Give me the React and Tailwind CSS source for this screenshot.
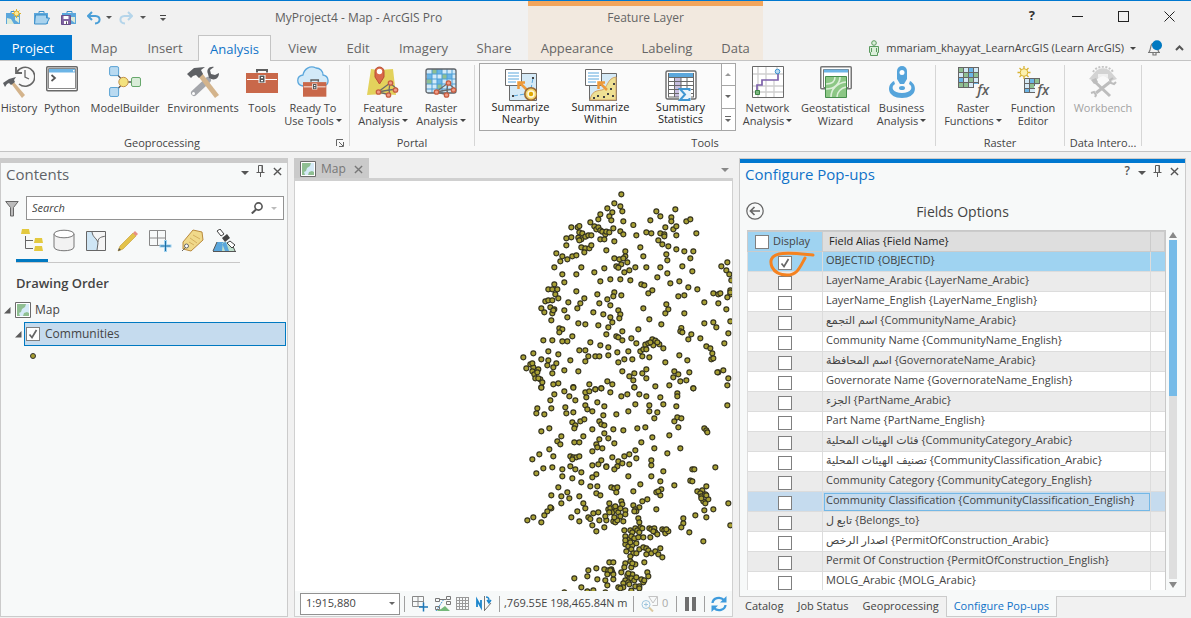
import { useState } from "react";
import clsx from "clsx";

/* ---------- data ---------- */

const FIELDS = [
  "OBJECTID {OBJECTID}",
  "LayerName_Arabic {LayerName_Arabic}",
  "LayerName_English {LayerName_English}",
  "اسم التجمع {CommunityName_Arabic}",
  "Community Name {CommunityName_English}",
  "اسم المحافظة {GovernorateName_Arabic}",
  "Governorate Name {GovernorateName_English}",
  "الجزء {PartName_Arabic}",
  "Part Name {PartName_English}",
  "فئات الهيئات المحلية {CommunityCategory_Arabic}",
  "تصنيف الهيئات المحلية {CommunityClassification_Arabic}",
  "Community Category {CommunityCategory_English}",
  "Community Classification {CommunityClassification_English}",
  "تابع ل {Belongs_to}",
  "اصدار الرخص {PermitOfConstruction_Arabic}",
  "Permit Of Construction {PermitOfConstruction_English}",
  "MOLG_Arabic {MOLG_Arabic}",
];
const CURRENT_FIELD = 12;

// community locations, three units to a screen pixel
const NORTH = `334,43 313,70 331,79 337,94 292,85 307,97 271,103 298,109 265,118 304,121 340,124 370,135 439,94 496,88 451,109 484,112 484,124
421,121 529,124 541,118 241,127 184,142 203,142 208,138 253,139 259,148 265,142 271,151 277,155 286,163 289,155 298,157 310,145 331,154 340,163 379,166
409,157 424,160 451,160 463,163 463,169 466,142 490,148 499,139 499,166 559,160 445,181 457,193 475,199 499,208 523,214 550,214
169,175 184,172 205,173 208,157 217,160 214,178 226,170 235,166 244,166 169,196 208,181 214,202 226,205 238,205 244,196 223,217 271,178 283,178 313,184 289,211
391,202 346,214 400,229 469,223 472,241 541,235 139,220 157,229 151,244 172,238 187,229 199,226 313,235 328,238 346,229 340,235 334,253 352,247 319,259 325,263
133,262 214,262 157,283 199,283 253,277 283,265 343,277 358,271 376,262 409,262 451,262 472,280 517,259 547,274 442,292 481,310 508,304
163,307 271,304 301,298 331,298 361,301 394,313 403,316 427,331 415,340 535,322 562,328 505,349 523,346 133,313 115,328 127,328 142,328 136,343 145,355
106,364 115,361 127,361 199,334 223,355 175,367 211,370 202,385 262,343 292,358 268,370 301,376 313,337 310,349 334,346 400,385 469,373 475,388 466,400 523,400
94,385 103,397 121,382 133,388 127,400 124,421 130,391 163,391 172,412 250,397 280,403 301,412 325,391 331,403 328,415 307,427 418,418 454,433
205,430 226,433 265,436 295,442 148,445 157,448 148,457 187,469 289,463 319,469 325,472 337,481 337,454 385,448 364,475 379,490
514,444 511,454 517,457 544,463 535,478 571,475 100,481 127,481 157,484 172,484 241,487 271,496 295,502 322,517 355,514
391,514 400,508 406,494 415,490 427,478 436,482 448,493 460,505 430,496 421,487 409,508 397,529 418,532 442,487 70,520 40,532 115,514 145,523 94,538 115,541 139,550
208,511 226,511 235,529 226,544 256,529 268,529 295,526 325,547 343,538 367,538 181,541 466,547 508,526 532,541
49,565 61,553 70,562 67,574 85,568 73,583 82,577 76,595 91,598 97,607 67,550 94,622 85,595 112,556 130,562 127,580 163,571 205,574 337,574
373,580 358,589 370,601 397,580 409,568 409,595 493,574 505,583 490,592 511,604 529,601 538,577 130,613 145,610 190,621 238,613 292,604 307,613 274,625 256,628 373,622 436,619 478,616 550,625
652,247 634,259 649,271 658,283 664,301 661,331 661,343 652,352 610,340 625,343 631,340 583,367 625,370 649,388 661,424 583,430 610,427 619,442
655,460 643,490 589,499 601,505 607,520 604,538 610,535 625,577 640,571 655,595 652,616 622,577 661,337`;

const SOUTH = `94,8 163,19 190,8 133,28 178,34 196,46 121,46 124,70 82,70 79,85 103,88 166,67 169,85 190,82 226,22 238,19 229,37 256,13 274,10 301,22
334,34 352,28 388,28 409,34 451,37 373,7 376,58 418,61 460,58 502,25 502,34 499,64 550,10 262,52 283,64 226,61 232,73 247,79 280,91 319,88 355,79
418,79 442,82 433,100 493,109 502,97 514,100 505,127 652,61 187,112 196,121 211,109 223,103 193,130 268,109 274,118 283,121 247,133 310,133 340,136 382,130 406,127
118,130 94,139 154,154 142,169 151,178 193,172 208,172 220,154 283,145 295,160 268,163 259,178 262,187 277,190 247,199 313,175 394,172 427,157 478,151 583,130 589,136 592,142
118,193 88,208 67,223 130,214 181,214 190,217 199,217 208,214 187,223 307,217 343,214 358,208 376,196 379,220 433,190 472,205 511,190 424,226 424,241
274,226 265,238 247,241 289,244 289,246 325,229 322,244 313,253 337,235 358,238 181,244 196,253 214,262 157,253 127,247 100,250 79,265 157,274 187,280 214,292
259,268 247,277 355,274 424,274 460,259 451,289 493,301 547,253 553,253 616,247 541,287 547,289 391,298 370,319 454,313 439,322 451,331 445,319
145,307 172,322 154,334 178,340 124,331 154,355 208,334 241,304 262,304 304,307 313,310 322,307 319,322 259,325 271,331 220,355 226,370 202,379 184,397 208,409
124,370 121,367 112,379 103,391 94,412 70,397 52,406 397,349 412,343 439,373 298,355 334,349 337,358 370,361 388,367 376,373 379,379 373,379
235,397 241,402 250,385 265,382 268,406 247,421 289,406 286,394 295,373 301,370 307,382 313,367 319,376 325,382 331,370 346,376 346,388 331,394 310,409 316,412 322,406 340,409 313,397 283,427 259,439 298,382 316,364
385,400 388,412 391,427 343,436 361,436 367,442 376,430 382,436 388,442 397,430 346,454 358,463 364,454 373,460 385,457 400,457 421,457 418,430 424,433 433,430 436,442 430,439 442,448 457,433 463,436 466,445 475,439 469,433
346,478 355,484 367,481 379,475 361,472 346,466 349,499 364,493 388,493 400,487 409,490 415,496 424,505 409,508 436,499 451,490 445,508 457,517 370,505 361,514 379,505 361,529 346,535 343,547 376,538 364,547 403,532 367,535
298,532 310,532 235,556 259,550 283,553 295,556 304,553 307,562 292,568 232,574 193,580 262,583 286,586 310,583 292,601 334,562 352,571 367,568 358,580 364,580 346,586 340,595 355,592 373,586 379,577 394,583 400,592 403,586 412,562 415,574
358,598 376,604 388,604 325,607 340,607 331,610 388,610 364,617 310,568 214,607 232,619 250,616 163,622 286,622 304,556 355,565 301,556
589,304 562,319 577,316 571,325 574,334 586,328 595,343 580,349 586,355 589,331 583,376 610,373 589,397 655,355 661,421 556,391 520,400 520,415 514,427 538,442 580,469 574,340`;

const toPoints = (text, dy) =>
  text.split(/\s+/).map((pair) => {
    const [x, y] = pair.split(",").map(Number);
    return { x, y: y + dy };
  });

const COMMUNITIES = [...toPoints(NORTH, 0), ...toPoints(SOUTH, 615)];

/* ---------- small glyphs ---------- */

function Caret({ className, large }) {
  return (
    <svg viewBox="0 0 8 4" className={clsx("shrink-0", large ? "h-1 w-2" : "h-[3px] w-[6px]", className)} fill="currentColor">
      <path d="M0 0h8L4 4z" />
    </svg>
  );
}

function ScrollArrow({ className }) {
  return (
    <svg viewBox="0 0 8 6" className={clsx("h-[6px] w-2", className)} fill="currentColor">
      <path d="M0 0h8L4 6z" />
    </svg>
  );
}

function PinIcon() {
  return (
    <svg viewBox="0 0 12 12" className="size-3" fill="none" stroke="#5c5c5c">
      <path d="M3.500 7V.500h4V7M1.500 7.500h8M5.500 7.500V12M7 .500V7" />
    </svg>
  );
}

function CloseIcon({ className }) {
  return (
    <svg viewBox="0 0 10 10" className={clsx("size-[9px]", className)} fill="none" stroke="currentColor" strokeWidth="1.5">
      <path d="M1 1l8 8M9 1l-8 8" />
    </svg>
  );
}

function Expander() {
  return (
    <svg viewBox="0 0 7 7" className="size-[7px] shrink-0" fill="#5c5c5c">
      <path d="M6.500 0v6.500H0z" />
    </svg>
  );
}

function MapThumb() {
  return (
    <svg viewBox="0 0 16 16" className="size-4 shrink-0">
      <path d="M.5.5h15v15H.5z" fill="#fff" stroke="#6b6b6b" />
      <path d="M2 2h12v12H2z" fill="#d5eaf7" />
      <path d="M2 2h9l-1 3-3 2-1 3-2 1 1 3H2zM9 11l3-1 2 1v3H8z" fill="#8fbf92" />
    </svg>
  );
}

function Check({ checked, onChange, label }) {
  return (
    <span className="grid">
      <input
        type="checkbox"
        aria-label={label}
        checked={checked}
        onChange={onChange}
        className="col-start-1 row-start-1 size-[14px] appearance-none border border-[#7f7f7f] bg-white"
      />
      {checked && (
        <svg viewBox="0 0 14 14" className="pointer-events-none col-start-1 row-start-1 size-[14px]" fill="none" stroke="#666" strokeWidth="1.7">
          <path d="M3.500 7.500l2.500 3 4.500-7.500" />
        </svg>
      )}
    </span>
  );
}

/* ---------- quick access icons ---------- */

function ProjectNewIcon({ sun, save }) {
  return (
    <svg viewBox="0 0 17 17" className="size-[17px]">
      <path d="M6 4V2.500h5V4" fill="none" stroke="#3d8fc9" />
      <path d="M1 4h14v11H1z" fill="#5ba7dc" />
      <path d="M2 9l4 1 3 5H2zM10 8h4v6l-4-3z" fill="#dcebd8" />
      {!sun && !save && <path d="M2.500 6h11v3h3l-3 6h-12z" fill="#a9d3ee" stroke="#3d8fc9" />}
      {sun && (
        <g stroke="#d9b332" fill="#fbe99a">
          <path d="M11.500 0v9M7 4.500h9M8.500 1.500l6 6M14.500 1.500l-6 6" />
          <circle cx="11.500" cy="4.500" r="2.500" />
        </g>
      )}
      {save && (
        <g>
          <path d="M.5 6.500h9v9h-9z" fill="#8064a2" stroke="#6a508c" />
          <path d="M2.500 7h5v3h-5zM3 12h4v3H3z" fill="#fff" />
          <path d="M5 12.500h1V15H5z" fill="#555" />
        </g>
      )}
    </svg>
  );
}

function UndoIcon({ redo }) {
  return (
    <svg viewBox="0 0 14 14" className="size-[14px]" fill="none" stroke={redo ? "#b5d5ea" : "#4a9fd8"} strokeWidth="2">
      <path d={redo ? "M9 1l4 4-4 4M13 5H5.500C0 5.500 0 12 6 12.500" : "M5 1L1 5l4 4M1 5h7.500c5.500.5 5.500 7-.5 7.500"} />
    </svg>
  );
}

/* ---------- ribbon icons (32 x 32) ---------- */

function Icon32({ children }) {
  return (
    <svg viewBox="0 0 32 32" className="size-8 shrink-0" fill="none">
      {children}
    </svg>
  );
}

function HistoryIcon() {
  return (
    <Icon32>
      <path d="M14 6a9.500 9.500 0 1 1 2 12" stroke="#666" strokeWidth="1.600" />
      <path d="M13 1v6h6" stroke="#666" strokeWidth="1.800" />
      <path d="M22 4v7l4 2" stroke="#666" strokeWidth="1.300" />
      <path d="M7 16l3-1 12 14-3 3z" fill="#d4b48c" />
      <path d="M0 17l6-4 7-2-2 3 1 2-4 3-2-2-2 1-2 3z" fill="#5e6064" />
    </Icon32>
  );
}

function PythonIcon() {
  return (
    <Icon32>
      <rect x=".75" y=".75" width="30.500" height="24" rx="1" fill="#fff" stroke="#696969" strokeWidth="1.500" />
      <path d="M2.500 2.500h27v20h-27z" stroke="#8a8a8a" />
      <path d="M3 3h26v3.500H3z" fill="#6cb5e6" />
      <path d="M27 4h1.500v1.500H27z" fill="#fff" />
      <path d="M5.500 9l3.500 3-3.500 3" stroke="#555" strokeWidth="1.700" />
    </Icon32>
  );
}

function ModelBuilderIcon() {
  return (
    <Icon32>
      <path d="M6 6l9 10L6 26M15 16h12" stroke="#555" strokeWidth="1.300" />
      <rect x=".6" y=".6" width="9" height="9" rx="1.500" fill="#b9daf1" stroke="#5ba3d4" />
      <rect x=".6" y="21.500" width="9" height="9" rx="1.500" fill="#b9daf1" stroke="#5ba3d4" />
      <circle cx="14.500" cy="16" r="4.700" fill="#f3e27e" stroke="#c3924a" />
      <rect x="22.500" y="11.500" width="9" height="9" rx="1.500" fill="#d9ecd8" stroke="#68a86c" />
    </Icon32>
  );
}

function EnvironmentsIcon() {
  return (
    <Icon32>
      <path d="M21 14L7 27" stroke="#a4a6ab" strokeWidth="6" strokeLinecap="round" />
      <circle cx="6.500" cy="27.500" r="1.500" fill="#fff" />
      <path d="M32 7l-4 2-4-1-1-4 4-3c-5-1-8 3-6 7l1 4c5 3 10 1 10-5z" fill="#5e6064" />
      <path d="M11 10l4-3 17 22-4 3z" fill="#d4b48c" />
      <path d="M0 8l7-6 11-1-4 3 2 4-4 4-3-3-3 1-2 2z" fill="#5e6064" />
    </Icon32>
  );
}

function Toolbox() {
  return (
    <>
      <path d="M11 6.500V4h10v2.500" stroke="#5e5e5e" strokeWidth="2" />
      <path d="M0 7h32v20H0z" fill="#c9684a" />
      <path d="M1 13.500h12M19 13.500h12" stroke="#fff" strokeWidth="1.200" />
      <path d="M12.500 9h7v8h-7z" fill="#fff" />
      <path d="M13.500 9.500h5v7h-5z" fill="#555" />
      <path d="M15 11h2v1.300h-2zM15 14h2v1.300h-2z" fill="#fff" />
    </>
  );
}

function ToolsIcon() {
  return (
    <Icon32>
      <Toolbox />
    </Icon32>
  );
}

function ReadyToUseIcon() {
  return (
    <Icon32>
      <path d="M6 20C-1 19-1 10 6 9 7 3 13-1 19 2c4 0 7 3 7 7 6 1 7 9 1 11z" fill="#d3eaf8" stroke="#5ba7dc" strokeWidth="1.300" />
      <g transform="translate(6 11) scale(.73)">
        <Toolbox />
      </g>
    </Icon32>
  );
}

function Network() {
  return (
    <g>
      <path d="M11 26l12-9 7 6-8 1 1 5zM22 24l-11 2M23 17l-1 7" stroke="#6b6b6b" strokeWidth="1.300" />
      <g fill="#f09d88" stroke="#c65d40" strokeWidth="1.300">
        <circle cx="11.500" cy="26" r="2.200" />
        <circle cx="23.500" cy="17" r="2.200" />
        <circle cx="28.500" cy="24" r="2.200" />
        <circle cx="21.500" cy="29" r="2.200" />
      </g>
    </g>
  );
}

function FeatureAnalysisIcon() {
  return (
    <Icon32>
      <path d="M4 3l8 1 14-1 3 26-12-1-17 1z" fill="#e3d25c" />
      <path d="M8 5.500a4.500 4.500 0 0 1 9 0V11l-4.500 7L8 11z" fill="#d9694a" stroke="#b94f33" />
      <circle cx="12.500" cy="5.500" r="2.700" fill="#fff" />
      <Network />
    </Icon32>
  );
}

function RasterAnalysisIcon() {
  return (
    <Icon32>
      <rect x="1" y="3" width="30" height="24" rx="2" fill="#d3eaf8" />
      <path d="M7 3h5v5H7zM17 8h5v5h-5zM2 13h5v5H2zM12 18h5v5h-5z" fill="#8fbf92" />
      <path d="M12 3h5v5h-5zM2 8h5v5H2zM22 8h5v5h-5zM12 13h5v5h-5z" fill="#6cb5e6" />
      <path d="M7 3v24M12 3v24M17 3v24M22 3v24M27 3v24M1 8h30M1 13h30M1 18h30M1 23h30" stroke="#4c9ed6" />
      <rect x="1" y="3" width="30" height="24" rx="2" stroke="#5f6368" strokeWidth="1.300" />
      <Network />
    </Icon32>
  );
}

function SummaryPage() {
  return (
    <>
      <path d="M.5.5h16v16H.5z" fill="#fff" stroke="#696969" />
      <path d="M3 4h11M3 7h11M3 10h11M3 13h8" stroke="#5ba7dc" />
      <path d="M22 21l-8-8M13.500 20v-6.500H20" stroke="#ee9a3a" strokeWidth="2.500" />
    </>
  );
}

function SummarizeNearbyIcon() {
  return (
    <Icon32>
      <path d="M4.500 4.500h27v27h-27z" fill="#d5eaf7" stroke="#696969" />
      <path d="M28 9l-2 11M8 27l12-2" stroke="#5ba7dc" strokeDasharray="5 2" />
      <path d="M27 8h2v2h-2zM7 26h2v2H7z" fill="#444" />
      <SummaryPage />
      <circle cx="26" cy="25" r="6.200" fill="#f4d56b" stroke="#9b6a35" strokeWidth="1.600" />
      <circle cx="26" cy="25" r="3.700" fill="#fff8dc" />
      <circle cx="26" cy="25" r="2.200" fill="#dfa800" />
    </Icon32>
  );
}

function SummarizeWithinIcon() {
  return (
    <Icon32>
      <path d="M4.500 4.500h27v27h-27z" fill="#d5eaf7" stroke="#696969" />
      <path d="M5 31c2-9 6-9 12-10 6-2 5-12 14-13v23z" fill="#eee093" stroke="#d2a468" />
      <path d="M12 26h2v2h-2zM18 27h2v2h-2zM22 24h2v2h-2zM27 26h2v2h-2zM25 19h2v2h-2zM28 14h2v2h-2zM8 28h2v2H8z" fill="#444" />
      <SummaryPage />
    </Icon32>
  );
}

function SummaryStatisticsIcon() {
  return (
    <Icon32>
      <rect x="1" y="2" width="30" height="28" rx="1.500" fill="#fff" stroke="#696969" strokeWidth="1.400" />
      <path d="M3 4h26v4H3z" fill="#5ba7dc" />
      <path d="M9 8h7v20H9z" fill="#c7bedf" />
      <path d="M3 8.500h26M3 12.500h26M3 16.500h26M3 20.500h26M3 24.500h26M3 28h26M3.500 4v24M9.500 8v20M16 8v20M22 8v20M28.500 4v24" stroke="#696969" />
      <path d="M14 19h12v13H14z" fill="#e9f3fa" />
      <path d="M24.500 22v-2H15l5 5.500-5 5.500h9.500v-2" stroke="#3f96d2" strokeWidth="2" />
    </Icon32>
  );
}

function NetworkAnalysisIcon() {
  return (
    <Icon32>
      <path d="M.5.5h31v31H.5z" fill="#fff" stroke="#696969" />
      <path d="M6 1v30M1 8h30M14 1v30M22 14v17M1 20h30M1 26h30M25 1v8" stroke="#cfcfcf" strokeWidth="1.300" />
      <path d="M5 26v-7h5v-5h16V6" stroke="#7d62ab" strokeWidth="1.700" />
      <circle cx="25.500" cy="5.500" r="2.300" fill="#b9daf1" stroke="#3f96d2" />
      <path d="M3.500 24.500h4v4h-4z" fill="#7cb77f" stroke="#3e8546" />
    </Icon32>
  );
}

function GeostatisticalIcon() {
  return (
    <Icon32>
      <rect x=".75" y=".75" width="30.500" height="22" rx="1" fill="#fff" stroke="#777" strokeWidth="1.500" />
      <path d="M3.500 3.500h25v18h-25z" fill="#fff" stroke="#777" />
      <path d="M4 3.500h24v3H4z" fill="#6cb5e6" />
      <path d="M5.500 10.500h21v21h-21z" fill="#8cc785" stroke="#468d4c" />
      <path d="M6 18c6 0 9-3 9-7M6 23c8 0 14-5 14-12M11 31c0-8 6-14 15-15M17 31c0-5 4-9 9-10" stroke="#dcefd9" strokeWidth="1.600" />
    </Icon32>
  );
}

function BusinessIcon() {
  return (
    <Icon32>
      <path d="M8 15c-8 4-7 17 8 17s16-13 8-17l-1 3c5 3 2 9-7 9s-12-6-7-9z" fill="#55a4db" />
      <path d="M11 5a5 5 0 0 1 10 0v8l-3 5h-4l-3-5z" fill="#55a4db" />
      <circle cx="16" cy="6.500" r="2.500" fill="#fff" />
      <ellipse cx="16" cy="22" rx="3" ry="2" fill="#55a4db" />
    </Icon32>
  );
}

function FxIcon({ grid }) {
  return (
    <span className="grid size-8 shrink-0">
      <svg viewBox="0 0 32 32" className="col-start-1 row-start-1 size-8" fill="none">
        {grid}
      </svg>
      <span className="col-start-1 row-start-1 self-end justify-self-end text-sm leading-4 font-semibold text-[#5e5e5e] italic">fx</span>
    </span>
  );
}

function RasterFunctionsIcon() {
  return (
    <FxIcon
      grid={
        <>
          <path d="M1 1h20v20H1z" fill="#d5eaf7" />
          <path d="M1 1h5v5H1zM6 6h5v5H6zM16 6h5v5h-5zM11 11h5v5h-5zM1 16h10v5H1z" fill="#8fbf92" />
          <path d="M11 1h5v5h-5zM1 11h5v5H1zM11 6h5v5h-5zM16 16h5v5h-5z" fill="#6cb5e6" />
          <path d="M1.500 1v20M6.500 1v20M11.500 1v20M16.500 1v20M21.500 1v20M1 1.500h21M1 6.500h21M1 11.500h21M1 16.500h21M1 21.500h21" stroke="#666" />
          <path d="M17 18h15v14H17z" fill="#f9f9f9" />
        </>
      }
    />
  );
}

function FunctionEditorIcon() {
  return (
    <FxIcon
      grid={
        <>
          <path d="M7 12h15v15H7z" fill="#d5eaf7" />
          <path d="M12 17h5v5h-5zM17 12h5v5h-5z" fill="#8fbf92" />
          <path d="M7 22h5v5H7zM12 12h5v5h-5z" fill="#6cb5e6" />
          <path d="M7.500 12v15M12.500 12v15M17.500 12v8M22.500 12v6M7 12.500h16M7 17.500h16M7 22.500h11M7 26.500h11" stroke="#666" />
          <path d="M18 19h14v13H18z" fill="#f9f9f9" />
          <path d="M7 0v13M.5 6.500h13M2.500 2l9 9M11.500 2l-9 9" stroke="#d9b332" strokeWidth="1.300" />
          <circle cx="7" cy="6.500" r="3.800" fill="#fbf0b0" stroke="#d9b332" />
        </>
      }
    />
  );
}

function WorkbenchIcon() {
  return (
    <Icon32>
      <path d="M6 6C10-1 22-1 26 6" stroke="#c4c4c4" strokeWidth="2" strokeDasharray="2 1.500" />
      <path d="M2 13l6-7c4-5 12-5 16 0l6 7-6 2-8-7-8 7z" fill="#d3d3d3" />
      <path d="M11 8h10v4l-5-2-5 2z" fill="#f0f0f0" />
      <path d="M7 15l16 15M23 16L9 27" stroke="#bdbdbd" strokeWidth="3" />
      <path d="M26 12l-3 2 1 3 3 1 2-2" stroke="#bdbdbd" strokeWidth="2" />
      <path d="M4 27l3-1 2 3-1 2" stroke="#bdbdbd" strokeWidth="2" />
      <path d="M4 14l5-2 2 4-4 2z" fill="#bdbdbd" />
    </Icon32>
  );
}

/* ---------- header ---------- */

const LEFT_TABS = [
  { name: "Map", width: "w-16" },
  { name: "Insert", width: "w-[58px]" },
  { name: "Analysis", width: "ml-1 w-[73px]", active: true },
  { name: "View", width: "w-[63px]" },
  { name: "Edit", width: "w-12" },
  { name: "Imagery", width: "w-[83px]" },
  { name: "Share", width: "w-[58px]" },
];

function Header() {
  return (
    <header className="flex h-[61px] shrink-0 border-t border-b border-t-[#0078d0] border-b-[#c4c4c4] bg-[#f1f1f1]">
      <div className="flex w-[528px] shrink-0 flex-col">
        <div className="flex h-[34px] items-center pb-px pl-[5px]">
          <div className="flex w-[270px] items-center text-[#555]">
            <button aria-label="New project"><ProjectNewIcon sun /></button>
            <button aria-label="Open project" className="ml-[11px]"><ProjectNewIcon /></button>
            <button aria-label="Save project" className="ml-[11px]"><ProjectNewIcon save /></button>
            <button aria-label="Undo" className="ml-[9px] flex items-center gap-[5px]"><UndoIcon /><Caret /></button>
            <button aria-label="Redo" className="ml-[7px] flex items-center gap-[7px]"><UndoIcon redo /><Caret /></button>
            <button aria-label="Customize quick access" className="ml-[14px] flex flex-col items-center gap-[2px]">
              <span className="h-px w-[6px] bg-[#444]" />
              <Caret />
            </button>
          </div>
          <h1 className="text-xs text-[#5f5f5f]">MyProject4 - Map - ArcGIS Pro</h1>
        </div>
        <nav className="flex h-[25px] items-stretch text-[13px] text-[#666]">
          <button className="w-[72px] bg-[#0078d0] pt-[3px] pr-[6px] text-white">Project</button>
          {LEFT_TABS.map((tab) => (
            <button
              key={tab.name}
              className={clsx(
                "pt-[3px]",
                tab.width,
                tab.active && "-mb-px border border-b-0 border-[#c4c4c4] bg-[#f9f9f9] text-[#0f72c8]",
              )}
            >
              {tab.name}
            </button>
          ))}
        </nav>
      </div>

      <div className="flex w-[235px] shrink-0 flex-col border-t-[5px] border-[#f3a55b] bg-[#f2e9df] text-[#666]">
        <p className="flex h-[29px] items-center justify-center pb-[6px] text-xs">Feature Layer</p>
        <nav className="flex h-[25px] pt-[3px] text-[13px]">
          <button className="w-[98px]">Appearance</button>
          <button className="w-[82px]">Labeling</button>
          <button className="w-[55px]">Data</button>
        </nav>
      </div>

      <div className="flex flex-1 flex-col items-end">
        <div className="flex h-[30px] items-center gap-[35px] pr-4 text-[#333]">
          <button aria-label="Help" className="mr-[2px] text-[13px] font-bold">?</button>
          <button aria-label="Minimize" className="flex h-3 w-[11px] items-center"><span className="h-px w-full bg-[#222]" /></button>
          <button aria-label="Maximize" className="size-[11px] border border-[#222]" />
          <button aria-label="Close">
            <svg viewBox="0 0 11 11" className="size-[11px]" stroke="#222"><path d="M.5.5l10 10M10.500.5l-10 10" /></svg>
          </button>
        </div>
        <div className="flex h-[29px] items-center pt-[5px] pr-[7px] text-[#555]">
          <svg viewBox="0 0 12 16" className="mr-[6px] h-4 w-3" fill="#dbeed9" stroke="#5a9a5e">
            <circle cx="6" cy="3" r="2.300" />
            <path d="M1.500 6.500h9v6h-1v3h-7v-3h-1zM3.500 8v4M8.500 8v4" />
          </svg>
          <button className="flex items-center gap-[6px] text-[11px] text-[#444]">
            mmariam_khayyat_LearnArcGIS (Learn ArcGIS)
            <Caret />
          </button>
          <button aria-label="Notifications" className="ml-[11px]">
            <svg viewBox="0 0 16 16" className="size-4" fill="none" stroke="#777" strokeWidth="1.200">
              <path d="M1 12.500h12M2 12c2-2 1-6 3-8 1-1 3-1 4 0 2 2 1 6 3 8M6 13v2h3v-2" />
              <circle cx="10" cy="5.200" r="5" fill="#0079c1" stroke="none" />
            </svg>
          </button>
          <button aria-label="Collapse ribbon" className="ml-3">
            <svg viewBox="0 0 9 6" className="h-[6px] w-[9px]" fill="none" stroke="#555" strokeWidth="2"><path d="M1 5l3.500-3.500L8 5" /></svg>
          </button>
        </div>
      </div>
    </header>
  );
}

/* ---------- ribbon ---------- */

function RibbonButton({ icon, lines, width, menu, muted }) {
  return (
    <button className={clsx("flex shrink-0 flex-col items-center pt-[5px]", width, muted ? "text-[#a3a3a3]" : "text-[#444]")}>
      {icon}
      <span className="mt-[3px] text-[11px] leading-[13px] whitespace-nowrap">
        {lines[0]}
        {lines[1] && (
          <span className="flex items-center justify-center gap-[2px]">
            {lines[1]}
            {menu && <Caret />}
          </span>
        )}
      </span>
    </button>
  );
}

function RibbonGroup({ title, width, launcher, children }) {
  return (
    <section className={clsx("flex shrink-0 flex-col", width)}>
      <div className={clsx("flex h-[72px]", launcher ? "justify-start" : "justify-center")}>{children}</div>
      <div className="flex h-[18px] items-center pt-[2px] text-[11px] text-[#444]">
        <h2 className={clsx("flex-1 text-center", launcher && "pr-3")}>{title}</h2>
        {launcher && (
          <button aria-label={`${title} options`} className="mr-[5px]">
            <svg viewBox="0 0 8 8" className="size-2" fill="none" stroke="#666"><path d="M.5 7V.5H7M3 3l4 4M7.500 3v4.500H3" /></svg>
          </button>
        )}
      </div>
    </section>
  );
}

function Divider() {
  return <div className="mt-1 mb-[5px] w-px shrink-0 bg-[#d6d6d6]" />;
}

function Gallery() {
  return (
    <div className="mt-[2px] flex h-[68px] w-[257px] shrink-0 border border-[#a6a6a6] bg-white text-[#222]">
      <div className="flex flex-1 bg-[#fbfbfb] pl-px">
        <GalleryItem icon={<SummarizeNearbyIcon />} lines={["Summarize", "Nearby"]} />
        <GalleryItem icon={<SummarizeWithinIcon />} lines={["Summarize", "Within"]} />
        <GalleryItem icon={<SummaryStatisticsIcon />} lines={["Summary", "Statistics"]} />
      </div>
      <div className="flex w-[15px] flex-col divide-y divide-[#a6a6a6] border-l border-[#a6a6a6] text-[#666]">
        <button aria-label="Scroll up" className="flex flex-1 items-center justify-center"><Caret className="rotate-180 text-[#999]" /></button>
        <button aria-label="Scroll down" className="flex flex-1 items-center justify-center"><Caret /></button>
        <button aria-label="More tools" className="flex flex-1 flex-col items-center justify-center gap-[2px]">
          <span className="h-px w-[6px] bg-[#666]" />
          <Caret />
        </button>
      </div>
    </div>
  );
}

function GalleryItem({ icon, lines }) {
  return (
    <button className="flex w-20 flex-col items-center pt-[5px]">
      {icon}
      <span className="text-[11px] leading-3">{lines[0]}</span>
      <span className="text-[11px] leading-3">{lines[1]}</span>
    </button>
  );
}

function Ribbon() {
  return (
    <div className="flex h-[91px] shrink-0 overflow-hidden border-b border-[#c4c4c4] bg-[#f9f9f9]">
      <RibbonGroup title="Geoprocessing" width="w-[349px]" launcher>
        <RibbonButton icon={<HistoryIcon />} lines={["History"]} width="w-[38px]" />
        <RibbonButton icon={<PythonIcon />} lines={["Python"]} width="w-12" />
        <RibbonButton icon={<ModelBuilderIcon />} lines={["ModelBuilder"]} width="w-[78px]" />
        <RibbonButton icon={<EnvironmentsIcon />} lines={["Environments"]} width="w-[78px]" />
        <RibbonButton icon={<ToolsIcon />} lines={["Tools"]} width="w-10" />
        <RibbonButton icon={<ReadyToUseIcon />} lines={["Ready To", "Use Tools"]} width="w-[62px]" menu />
      </RibbonGroup>
      <Divider />
      <RibbonGroup title="Portal" width="w-[124px]">
        <RibbonButton icon={<FeatureAnalysisIcon />} lines={["Feature", "Analysis"]} width="w-[58px]" menu />
        <RibbonButton icon={<RasterAnalysisIcon />} lines={["Raster", "Analysis"]} width="w-[58px]" menu />
      </RibbonGroup>
      <Divider />
      <RibbonGroup title="Tools" width="w-[460px]">
        <Gallery />
        <RibbonButton icon={<NetworkAnalysisIcon />} lines={["Network", "Analysis"]} width="w-16" menu />
        <RibbonButton icon={<GeostatisticalIcon />} lines={["Geostatistical", "Wizard"]} width="w-[72px]" />
        <RibbonButton icon={<BusinessIcon />} lines={["Business", "Analysis"]} width="w-[60px]" menu />
      </RibbonGroup>
      <Divider />
      <RibbonGroup title="Raster" width="w-[128px]">
        <RibbonButton icon={<RasterFunctionsIcon />} lines={["Raster", "Functions"]} width="w-[66px]" menu />
        <RibbonButton icon={<FunctionEditorIcon />} lines={["Function", "Editor"]} width="w-[54px]" />
      </RibbonGroup>
      <Divider />
      <RibbonGroup title="Data Intero..." width="w-[76px]">
        <RibbonButton icon={<WorkbenchIcon />} lines={["Workbench"]} width="w-[76px]" muted />
      </RibbonGroup>
      <Divider />
    </div>
  );
}

/* ---------- contents pane ---------- */

const LIST_MODES = [
  {
    name: "List by drawing order",
    art: (
      <>
        <path d="M2 0h7l1 5H1zM15 9h7l1 5h-9zM15 17h7l1 5h-9z" fill="#e3c93f" />
        <path d="M5.500 7v12.500H13M5.500 11.500H13" stroke="#666" />
      </>
    ),
  },
  {
    name: "List by data source",
    art: (
      <>
        <path d="M2 5v13c0 5 20 5 20 0V5" fill="#f2f2f2" stroke="#777" />
        <ellipse cx="12" cy="5" rx="10" ry="3.800" fill="#fff" stroke="#777" />
      </>
    ),
  },
  {
    name: "List by selection",
    art: (
      <>
        <path d="M2.500 2.500h19v19h-19z" fill="#f5f5f5" stroke="#666" />
        <path d="M3 3h5c1 6 5 7 6 11l-1 7H3z" fill="#cfe6f5" />
        <path d="M8 3c1 6 5 6 6 11l-1 7M14 13c0-5 4-5 8-6" stroke="#666" />
      </>
    ),
  },
  {
    name: "List by editing",
    art: (
      <>
        <path d="M2 22l2-5L17 4l3 3L7 20z" fill="#e3c24a" stroke="#c49b2c" strokeWidth=".6" />
        <path d="M17 4l2-2 3 3-2 2z" fill="#e88f83" />
        <path d="M2 22l1-3 2 2z" fill="#555" />
      </>
    ),
  },
  {
    name: "List by snapping",
    art: (
      <>
        <path d="M1.500 1.500h16v15h-16zM9.500 1.500v15M1.500 9h16" stroke="#888" />
        <path d="M17.500 11v12M11.500 17h12" stroke="#9fd2f0" strokeWidth="3" />
        <path d="M17.500 12v10M12.500 17h10" stroke="#1d6fa5" />
      </>
    ),
  },
  {
    name: "List by labeling",
    art: (
      <>
        <path d="M3 13L13 1l9 2 1 8-12 11-8-2z" fill="#f0d98a" stroke="#b98a3d" />
        <path d="M10 9l7 5M13 6l7 4M9 13l5 3" stroke="#c79c4c" strokeWidth=".7" />
        <circle cx="6.500" cy="17" r="2" fill="#fff" stroke="#666" />
        <path d="M6 18l-4 4" stroke="#666" />
      </>
    ),
  },
  {
    name: "List by perspective imagery",
    art: (
      <>
        <path d="M5 13h14l4 9H1z" fill="#bfe0cc" />
        <path d="M5 13l-4 9h9l1-9zM14 13l3 9h-4l-3-8z" fill="#5ba7dc" />
        <path d="M1 22.500h23M5 13l-4 9M20 15l3 7" stroke="#555" />
        <path d="M5 2l3-2 4 5-3 2zM15 14l3-2 5 4-3 3z" fill="#fff" stroke="#444" />
        <path d="M10 9l5-4 3 4-5 4z" fill="#444" />
      </>
    ),
  },
];

function ContentsPane() {
  const [visible, setVisible] = useState(true);
  return (
    <aside className="flex w-72 shrink-0 flex-col border border-t-[5px] border-[#cbcbcb] bg-[#f7f9f9] text-[#444]">
      <div className="flex h-[22px] items-center pr-[5px] pl-[5px] text-[#555]">
        <h2 className="flex-1 text-[15px] text-[#5f6368]">Contents</h2>
        <div className="flex items-center gap-[6px] pb-[6px]">
          <button aria-label="Contents menu" className="pt-1"><Caret large /></button>
          <button aria-label="Auto hide contents"><PinIcon /></button>
          <button aria-label="Close contents"><CloseIcon /></button>
        </div>
      </div>

      <div className="mt-[11px] flex items-center gap-[7px] pr-[3px] pl-1">
        <button aria-label="Filter">
          <svg viewBox="0 0 14 17" className="h-[17px] w-[14px]" fill="#bbb" stroke="#666"><path d="M.7 1.500h12.500L8.500 7.500V16h-3V7.500z" /></svg>
        </button>
        <label className="flex h-6 flex-1 items-center border border-[#929292] bg-white pr-[6px] pl-[5px]">
          <input type="search" placeholder="Search" aria-label="Search" className="min-w-0 flex-1 pt-px text-[11px] italic outline-none placeholder:text-[#444]" />
          <svg viewBox="0 0 12 12" className="size-3" fill="none" stroke="#555" strokeWidth="1.600">
            <circle cx="7.500" cy="4.500" r="3.600" />
            <path d="M5 7.500L.8 11.500" strokeWidth="2" />
          </svg>
          <Caret className="ml-2 text-[#bbb]" />
        </label>
      </div>

      <div className="mt-[9px] mr-auto ml-[15px] flex border-b border-[#c8c8c8]">
        {LIST_MODES.map((mode, i) => (
          <button
            key={mode.name}
            aria-label={mode.name}
            className={clsx("flex h-[33px] w-8 justify-center border-b-[3px]", i === 0 ? "border-[#0079c1]" : "border-transparent")}
          >
            <svg viewBox="0 0 24 24" className="size-6" fill="none">{mode.art}</svg>
          </button>
        ))}
      </div>

      <h3 className="mt-[10px] pl-[15px] text-[13px] leading-5 font-semibold">Drawing Order</h3>
      <ul className="mt-[6px] text-xs">
        <li className="flex h-[22px] items-center gap-1 pl-[3px]">
          <Expander />
          <MapThumb />
          Map
        </li>
        <li className="mt-px flex items-center gap-[2px] pr-px pl-[14px]">
          <Expander />
          <label className="flex h-6 flex-1 items-center gap-[5px] border border-[#0079c1] bg-[#c5dbee] pl-px">
            <Check checked={visible} onChange={() => setVisible(!visible)} label="Communities" />
            Communities
          </label>
        </li>
        <li className="pt-[7px] pl-[29px]">
          <svg viewBox="0 0 18 18" className="size-[6px]"><circle cx="9" cy="9" r="7.500" fill="#a69d31" stroke="#333" strokeWidth="3" /></svg>
        </li>
      </ul>
    </aside>
  );
}

/* ---------- map view ---------- */

function StatusDivider() {
  return <span className="h-4 w-px shrink-0 bg-[#a0a0a0]" />;
}

function StatusBar() {
  return (
    <div className="flex h-[25px] shrink-0 items-center bg-[#f7f9f9] pl-[5px] text-[11px] text-[#444]">
      <label className="flex h-[22px] w-[100px] shrink-0 items-center border border-[#929292] bg-white pr-[4px] pl-[5px]">
        <select aria-label="Map scale" defaultValue="1:915,880" className="flex-1 appearance-none outline-none">
          <option>1:915,880</option>
        </select>
        <Caret className="text-[#666]" />
      </label>
      <div className="ml-1 flex items-center gap-[7px]">
        <StatusDivider />
        <button aria-label="Snapping">
          <svg viewBox="0 0 16 16" className="size-4" fill="none">
            <path d="M.5.5h11v10H.5zM6 .5v10M.5 5.500h11" stroke="#888" />
            <path d="M11.500 6.500v9M7 11h9" stroke="#1d78b8" strokeWidth="1.500" />
          </svg>
        </button>
        <button aria-label="Dynamic constraints">
          <svg viewBox="0 0 16 16" className="size-4" fill="none">
            <path d="M1 15h14l-5-5-4 3z" fill="#74b87a" />
            <path d="M1 15l8-12" stroke="#3f96d2" strokeDasharray="2 1" />
            <path d="M.5 2.500h4v3h-4zM11.500.5h4v3h-4zM11.500 5.500h4v3h-4zM.5 10.500h4v3h-4zM5 3.500h6" stroke="#777" />
          </svg>
        </button>
        <button aria-label="Grid" className="-ml-[2px]">
          <svg viewBox="0 0 13 13" className="size-[13px]" stroke="#999"><path d="M.5 0v13M3.500 0v13M6.500 0v13M9.500 0v13M12.500 0v13M0 .5h13M0 3.500h13M0 6.500h13M0 9.500h13M0 12.500h13" /></svg>
        </button>
        <button aria-label="North up">
          <svg viewBox="0 0 16 15" className="h-[15px] w-4" fill="none">
            <path d="M1 11V4l4 7V4" stroke="#1d86cc" strokeWidth="1.800" />
            <path d="M8.500 0v15M9 14l6-7" stroke="#777" />
            <path d="M10 1c3 0 3 2 3 5M11 4l2 3 2-3" stroke="#1d86cc" strokeWidth="1.400" />
          </svg>
        </button>
      </div>
      <div className="ml-[7px] flex flex-1 items-center overflow-hidden whitespace-nowrap">
        <StatusDivider />
        <span className="pl-1">,769.55E 198,465.84N m</span>
      </div>
      <StatusDivider />
      <button className="ml-[7px] flex h-5 w-8 items-center gap-1 text-[#aaa]" aria-label="Selected features: 0">
        <svg viewBox="0 0 17 16" className="h-4 w-[17px]" fill="none" stroke="#c3c3c3">
          <path d="M7.500.5h9v9h-5M8 1l4 6 4-6" />
          <circle cx="5" cy="8.500" r="4" stroke="#9fc6de" />
          <path d="M3 8.500h4M5 6.500v4" stroke="#9fc6de" />
          <path d="M8 11.500l4 4" stroke="#dcc9a0" strokeWidth="2" />
        </svg>
        0
      </button>
      <div className="flex items-center gap-2 pr-[5px] pl-[3px]">
        <StatusDivider />
        <button aria-label="Pause drawing" className="flex gap-[3px]">
          <span className="h-[14px] w-1 bg-[#6f6f6f]" />
          <span className="h-[14px] w-1 bg-[#6f6f6f]" />
        </button>
        <StatusDivider />
        <button aria-label="Refresh" className="-ml-[2px]">
          <svg viewBox="0 0 16 16" className="size-4" fill="none" stroke="#3f9bdc" strokeWidth="2.300">
            <path d="M1.500 7C2 2 9 0 13 4M14.500 9C14 14 7 16 3 12" />
            <path d="M15.500 0v6.500H9zM.5 16V9.500H7z" fill="#3f9bdc" stroke="none" />
          </svg>
        </button>
      </div>
    </div>
  );
}

function MapPane() {
  return (
    <main className="flex min-w-0 flex-1 flex-col">
      <div className="flex h-5 shrink-0 items-center justify-between pr-1">
        <div className="flex h-5 w-[75px] items-center bg-[#cacaca] pt-[2px] pl-[6px] text-xs text-[#777]">
          <MapThumb />
          <span className="ml-[5px]">Map</span>
          <button aria-label="Close map" className="ml-2"><CloseIcon /></button>
        </div>
        <button aria-label="Open views" className="mt-1 text-[#888]"><Caret large /></button>
      </div>
      <div className="flex min-h-0 flex-1 flex-col border border-t-[3px] border-[#d0d0d0] bg-white">
        <div className="flex min-h-0 flex-1 justify-end overflow-hidden">
          <svg viewBox="0 3 666 1233" className="h-[411px] w-[222px] shrink-0" role="img" aria-label="Communities">
            {COMMUNITIES.map((p, i) => (
              <circle key={i} cx={p.x} cy={p.y} r="7.500" fill="#a8a034" stroke="#35331f" strokeWidth="3.400" />
            ))}
          </svg>
        </div>
        <StatusBar />
      </div>
    </main>
  );
}

/* ---------- configure pop-ups pane ---------- */

function FieldsTable() {
  const [shown, setShown] = useState([0]);
  const toggle = (i) => setShown(shown.includes(i) ? shown.filter((n) => n !== i) : [...shown, i]);

  return (
    <div className="flex min-h-0 flex-1 gap-[3px] pr-2 pl-[7px]">
      <div className="min-w-0 flex-1 overflow-hidden border-t border-r border-[#c8c8c8]">
        <table className="w-full table-fixed border-collapse text-[11px] text-[#444]">
          <thead>
            <tr className="h-5 border-b border-[#cbcbcb] bg-[#dedede] text-left text-[#222]">
              <th className="w-[75px] border border-[#cbcbcb] bg-[#9fd3f1] p-0 font-normal text-[#444]">
                <label className="flex items-center gap-1 pl-[7px]">
                  <Check
                    label="Display"
                    checked={shown.length === FIELDS.length}
                    onChange={() => setShown(shown.length === FIELDS.length ? [] : FIELDS.map((_, i) => i))}
                  />
                  Display
                </label>
              </th>
              <th className="border border-[#cbcbcb] py-0 pl-[6px] font-normal">Field Alias {"{Field Name}"}</th>
              <th className="w-[14px] border border-[#cbcbcb] p-0" aria-label="Spacer" />
            </tr>
          </thead>
          <tbody>
            {FIELDS.map((field, i) => (
              <tr
                key={field}
                className={clsx(
                  "h-5 border-b border-[#dcdcdc]",
                  i === 0 ? "bg-[#9fd3f1]" : i === CURRENT_FIELD ? "bg-[#c5dbee]" : i % 2 ? "bg-[#ebebeb]" : "bg-white",
                )}
              >
                <td className="border-x border-[#dcdcdc] p-0">
                  <div className="relative flex h-[19px] items-end justify-center pb-px">
                    <Check label={field} checked={shown.includes(i)} onChange={() => toggle(i)} />
                    {i === 0 && (
                      <svg viewBox="0 0 48 30" className="pointer-events-none absolute -top-[2px] left-5 z-10 h-[30px] w-12" fill="none" stroke="#f58220" strokeWidth="3" strokeLinecap="round" strokeLinejoin="round">
                        <path d="M45 5C34 4 20 2 11 4 2 6 2 12 4 17c3 6 9 8 15 8 10 0 12-6 18-17" />
                      </svg>
                    )}
                  </div>
                </td>
                <td className={clsx("border-x border-[#dcdcdc] p-0", i === CURRENT_FIELD && "outline -outline-offset-2 outline-[#74b8e6]")}>
                  <div className="h-[19px] overflow-hidden pl-[3px] leading-4 whitespace-nowrap">{field}</div>
                </td>
                <td className="p-0" />
              </tr>
            ))}
          </tbody>
        </table>
      </div>
      <div className="flex w-2 shrink-0 flex-col items-center text-[#888]">
        <button aria-label="Scroll up" className="flex h-[10px] items-center"><ScrollArrow className="rotate-180" /></button>
        <div className="w-full flex-1 bg-[#dedede]">
          <div className="h-[46%] bg-[#76bbe8]" />
        </div>
        <button aria-label="Scroll down" className="flex h-[11px] items-center"><ScrollArrow /></button>
      </div>
    </div>
  );
}

function PopupsPane() {
  return (
    <aside className="flex w-[447px] shrink-0 flex-col">
      <div className="flex min-h-0 flex-1 flex-col border border-[#cbcbcb] bg-[#f7f9f9] pb-[6px]">
        <div className="h-1 shrink-0 bg-[#0078d0]" />
        <div className="flex h-[22px] shrink-0 items-center pr-[6px] pl-[5px] text-[#555]">
          <h2 className="flex-1 text-[15px] text-[#0f72c8]">Configure Pop-ups</h2>
          <div className="flex items-center gap-[6px] pb-[6px]">
            <button aria-label="Pane help" className="mr-[2px] text-xs font-semibold leading-3">?</button>
            <button aria-label="Pane menu" className="pt-1"><Caret large /></button>
            <button aria-label="Auto hide pane"><PinIcon /></button>
            <button aria-label="Close pane"><CloseIcon /></button>
          </div>
        </div>
        <div className="mt-4 mb-[9px] flex h-5 shrink-0 items-center pl-[6px]">
          <button aria-label="Back">
            <svg viewBox="0 0 18 18" className="size-[18px]" fill="none" stroke="#666" strokeWidth="1.200">
              <circle cx="9" cy="9" r="8.200" />
              <path d="M14 9H5M8.500 5L4.500 9l4 4" strokeWidth="1.700" />
            </svg>
          </button>
          <h3 className="flex-1 pt-px pr-6 text-center text-sm text-[#444]">Fields Options</h3>
        </div>
        <FieldsTable />
      </div>
      <nav className="-mt-px flex h-[21px] shrink-0 items-stretch pl-[6px] text-[11px] text-[#444]">
        <button className="mr-[14px]">Catalog</button>
        <button className="mr-[14px]">Job Status</button>
        <button className="mr-[7px]">Geoprocessing</button>
        <button className="border border-t-0 border-[#cbcbcb] bg-[#f7f9f9] px-[7px] text-[#0f72c8]">Configure Pop-ups</button>
      </nav>
    </aside>
  );
}

export default function App() {
  return (
    <div className="flex h-screen flex-col overflow-hidden bg-[#f1f1f1] font-['Open_Sans','Noto_Sans','DejaVu_Sans',sans-serif]">
      <Header />
      <Ribbon />
      <div className="flex min-h-0 flex-1 gap-[6px] pt-[6px] pr-[5px] pb-px">
        <ContentsPane />
        <MapPane />
        <PopupsPane />
      </div>
    </div>
  );
}
